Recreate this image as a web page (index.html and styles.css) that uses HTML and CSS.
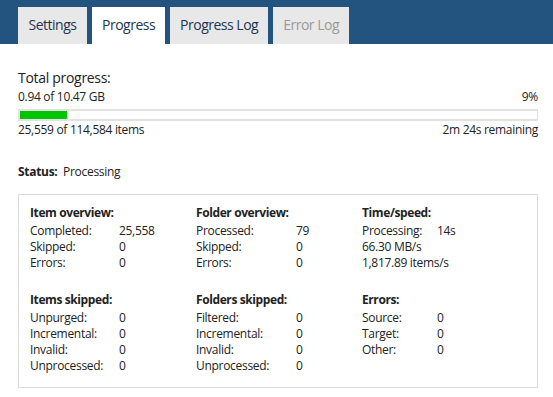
FILE: index.html
```html
<!DOCTYPE html>
<html>
<head>
    <title>Progress</title>
    <link rel="stylesheet" href="styles.css">
</head>
<body>
    <div class="header">
        <div class="tab">Settings</div>
        <div class="tab active">Progress</div>
        <div class="tab">Progress Log</div>
        <div class="tab disabled">Error Log</div>
    </div>

    <div class="content">
        <div class="total-title">Total progress:</div>
        <div class="line">
            <span>0.94 of 10.47 GB</span>
            <span>9%</span>
        </div>
        <div class="bar"><div class="fill" style="width: 9%"></div></div>
        <div class="line">
            <span>25,559 of 114,584 items</span>
            <span>2m 24s remaining</span>
        </div>

        <div class="status"><b>Status:</b>&nbsp; Processing</div>

        <div class="box">
            <div class="section">
                <h4>Item overview:</h4>
                <div class="rows c1">
                    <span>Completed:</span><span>25,558</span>
                    <span>Skipped:</span><span>0</span>
                    <span>Errors:</span><span>0</span>
                </div>
            </div>
            <div class="section">
                <h4>Folder overview:</h4>
                <div class="rows c2">
                    <span>Processed:</span><span>79</span>
                    <span>Skipped:</span><span>0</span>
                    <span>Errors:</span><span>0</span>
                </div>
            </div>
            <div class="section">
                <h4>Time/speed:</h4>
                <div class="rows c3">
                    <span>Processing:</span><span>14s</span>
                    <span class="wide">66.30 MB/s</span>
                    <span class="wide">1,817.89 items/s</span>
                </div>
            </div>

            <div class="section">
                <h4>Items skipped:</h4>
                <div class="rows c1">
                    <span>Unpurged:</span><span>0</span>
                    <span>Incremental:</span><span>0</span>
                    <span>Invalid:</span><span>0</span>
                    <span>Unprocessed:</span><span>0</span>
                </div>
            </div>
            <div class="section">
                <h4>Folders skipped:</h4>
                <div class="rows c2">
                    <span>Filtered:</span><span>0</span>
                    <span>Incremental:</span><span>0</span>
                    <span>Invalid:</span><span>0</span>
                    <span>Unprocessed:</span><span>0</span>
                </div>
            </div>
            <div class="section">
                <h4>Errors:</h4>
                <div class="rows c3">
                    <span>Source:</span><span>0</span>
                    <span>Target:</span><span>0</span>
                    <span>Other:</span><span>0</span>
                </div>
            </div>
        </div>
    </div>
</body>
</html>
```

FILE: styles.css
```css
body {
    margin: 0;
    font-family: "Open Sans", "Noto Sans", sans-serif;
    color: #222;
    background: #fff;
}
.header {
    background: #23537f;
    height: 44px;
    display: flex;
    align-items: flex-end;
    gap: 5px;
    padding-left: 18px;
}
.tab {
    background: #e8e8e8;
    color: #1f3552;
    font-size: 14px;
    letter-spacing: -0.5px;
    height: 37px;
    line-height: 36px;
    min-width: 69px;
    text-align: center;
    padding: 0 10px;
    box-sizing: border-box;
}
.tab.active {
    background: #fff;
}
.tab.disabled {
    color: #9a9a9a;
}
.content {
    padding: 24px 15px 0 18px;
    font-size: 12px;
    letter-spacing: -0.3px;
}
.total-title {
    font-size: 14px;
    line-height: 20px;
}
.line {
    display: flex;
    justify-content: space-between;
    line-height: 17px;
}
.bar {
    height: 8px;
    border: 2px solid #e2e2e2;
    border-right-width: 1px;
    margin: 4px 0 0;
}
.fill {
    height: 100%;
    background: #00c400;
}
.status {
    margin-top: 25px;
    line-height: 17px;
}
.box {
    margin-top: 14px;
    border: 1px solid #dcdcdc;
    padding: 10px 0 13px 11px;
    display: grid;
    grid-template-columns: 166px 166px 1fr;
    row-gap: 21px;
}
.section h4 {
    margin: 0 0 2px;
    font-size: 12px;
    letter-spacing: -0.4px;
    line-height: 16px;
}
.rows {
    display: grid;
    line-height: 16px;
}
.rows.c1 {
    grid-template-columns: 89px auto;
}
.rows.c2 {
    grid-template-columns: 100px auto;
}
.rows.c3 {
    grid-template-columns: 75px auto;
}
.rows .wide {
    grid-column: 1 / span 2;
}
```
